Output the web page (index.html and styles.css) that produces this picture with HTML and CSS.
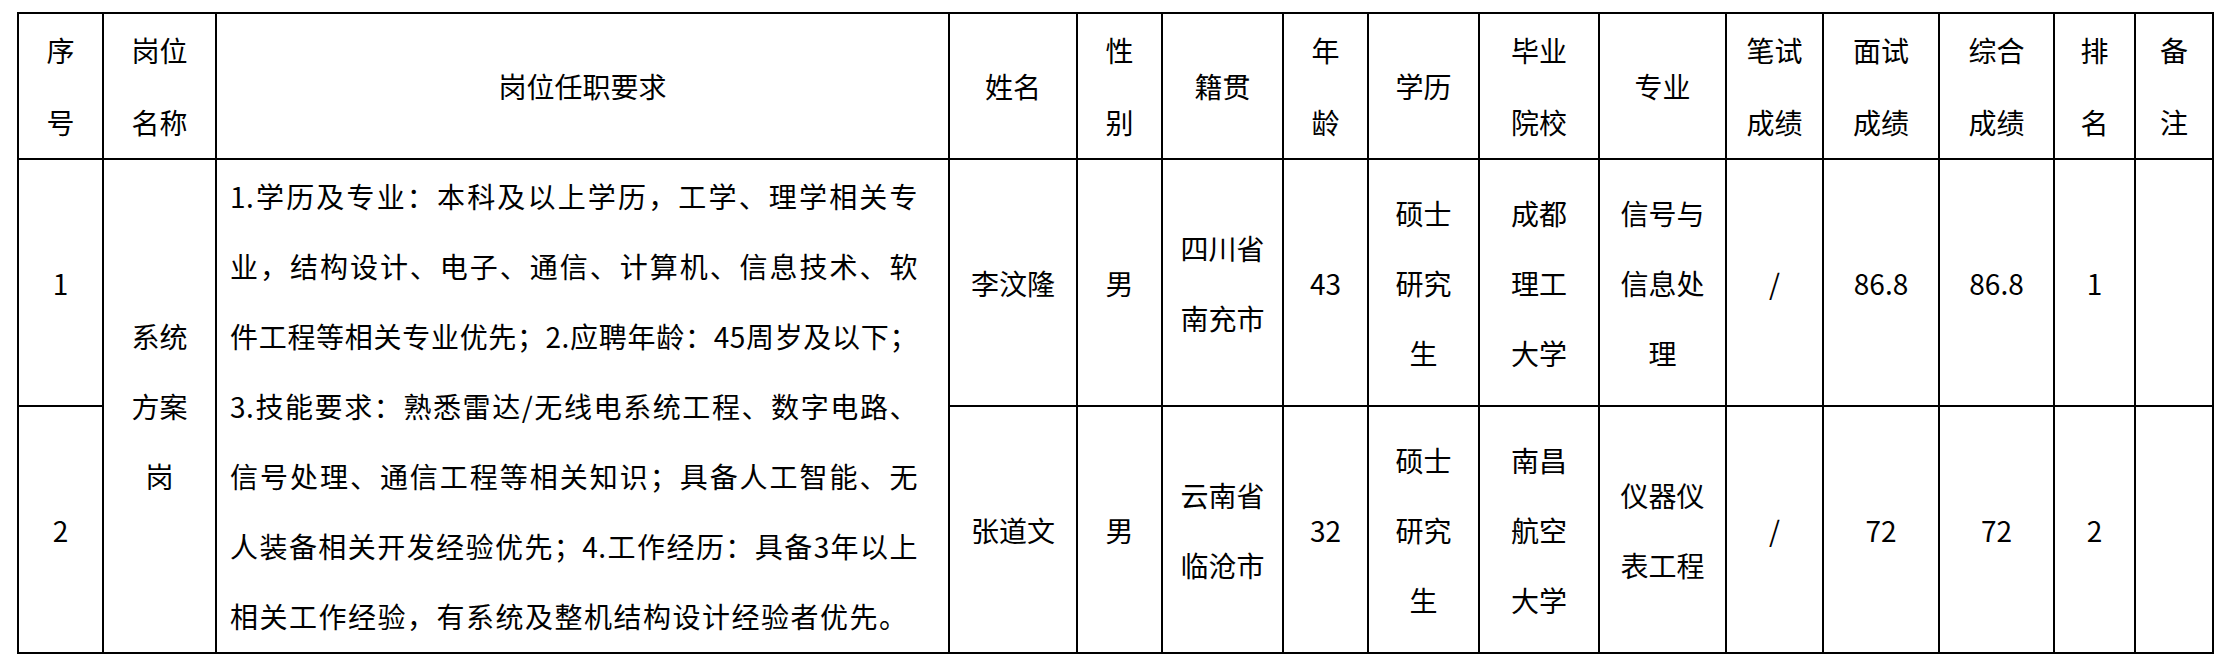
FILE: index.html
```html
<!DOCTYPE html>
<html lang="zh-CN">
<head>
<meta charset="utf-8">
<title>岗位面试成绩</title>
<link rel="stylesheet" href="styles.css">
</head>
<body>
<div class="page">
<table class="grid">
  <colgroup>
    <col class="c-no"><col class="c-post"><col class="c-req"><col class="c-name"><col class="c-sex">
    <col class="c-home"><col class="c-age"><col class="c-edu"><col class="c-school"><col class="c-major">
    <col class="c-written"><col class="c-interview"><col class="c-total"><col class="c-rank"><col class="c-note">
  </colgroup>
  <thead>
    <tr class="head">
      <th>序<br>号</th>
      <th>岗位<br>名称</th>
      <th>岗位任职要求</th>
      <th>姓名</th>
      <th>性<br>别</th>
      <th>籍贯</th>
      <th>年<br>龄</th>
      <th>学历</th>
      <th>毕业<br>院校</th>
      <th>专业</th>
      <th>笔试<br>成绩</th>
      <th>面试<br>成绩</th>
      <th>综合<br>成绩</th>
      <th>排<br>名</th>
      <th>备<br>注</th>
    </tr>
  </thead>
  <tbody>
    <tr class="row">
      <td class="num">1</td>
      <td rowspan="2">系统<br>方案<br>岗</td>
      <td rowspan="2" class="req">
        <span class="ln">1.学历及专业：本科及以上学历，工学、理学相关专</span>
        <span class="ln">业，结构设计、电子、通信、计算机、信息技术、软</span>
        <span class="ln">件工程等相关专业优先；2.应聘年龄：45周岁及以下；</span>
        <span class="ln">3.技能要求：熟悉雷达/无线电系统工程、数字电路、</span>
        <span class="ln">信号处理、通信工程等相关知识；具备人工智能、无</span>
        <span class="ln">人装备相关开发经验优先；4.工作经历：具备3年以上</span>
        <span class="ln last">相关工作经验，有系统及整机结构设计经验者优先。</span>
      </td>
      <td>李汶隆</td>
      <td>男</td>
      <td>四川省<br>南充市</td>
      <td class="num">43</td>
      <td>硕士<br>研究<br>生</td>
      <td>成都<br>理工<br>大学</td>
      <td>信号与<br>信息处<br>理</td>
      <td class="num">/</td>
      <td class="num">86.8</td>
      <td class="num">86.8</td>
      <td class="num">1</td>
      <td></td>
    </tr>
    <tr class="row">
      <td class="num">2</td>
      <td>张道文</td>
      <td>男</td>
      <td>云南省<br>临沧市</td>
      <td class="num">32</td>
      <td>硕士<br>研究<br>生</td>
      <td>南昌<br>航空<br>大学</td>
      <td>仪器仪<br>表工程</td>
      <td class="num">/</td>
      <td class="num">72</td>
      <td class="num">72</td>
      <td class="num">2</td>
      <td></td>
    </tr>
  </tbody>
</table>
</div>
</body>
</html>
```
FILE: styles.css
```css
html, body {
  margin: 0;
  padding: 0;
  background: #fff;
}

.page {
  padding: 12px 0 0 17px;
}

.grid {
  border-collapse: collapse;
  table-layout: fixed;
  width: 2196px;
  font-family: "Noto Sans CJK SC", "Noto Sans", sans-serif;
  font-size: 28px;
  color: #000;
}

.grid th,
.grid td {
  border: 2px solid #000;
  padding: 0;
  text-align: center;
  vertical-align: middle;
  font-weight: 400;
  line-height: 70px;
}

.head th {
  height: 141px;
  line-height: 72px;
}

.row td {
  height: 245px;
}

.grid td.req {
  text-align: left;
  line-height: 70px;
  padding: 0 30px 0 13px;
}

.ln {
  display: block;
  text-align: justify;
  text-align-last: justify;
  letter-spacing: 0.5px;
}

.ln.last {
  text-align-last: left;
  letter-spacing: 1.5px;
}

.num {
  font-size: 28px;
}

.c-no { width: 85px; }
.c-post { width: 113px; }
.c-req { width: 733px; }
.c-name { width: 128px; }
.c-sex { width: 85px; }
.c-home { width: 121px; }
.c-age { width: 85px; }
.c-edu { width: 111px; }
.c-school { width: 120px; }
.c-major { width: 127px; }
.c-written { width: 97px; }
.c-interview { width: 116px; }
.c-total { width: 115px; }
.c-rank { width: 81px; }
.c-note { width: 78px; }
```
